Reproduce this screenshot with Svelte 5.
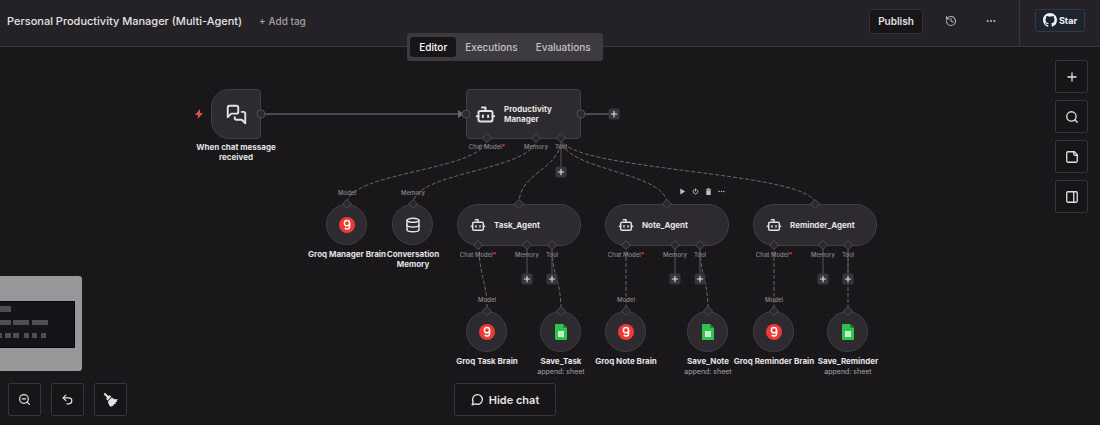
<script>
  const strokes = {
    bot: ['M12 8V4H8', 'M6 8h12a2 2 0 0 1 2 2v8a2 2 0 0 1-2 2H6a2 2 0 0 1-2-2v-8a2 2 0 0 1 2-2z', 'M2 14h2', 'M20 14h2', 'M15 13v2', 'M9 13v2'],
    chat: ['M14 9a2 2 0 0 1-2 2H6l-4 4V4a2 2 0 0 1 2-2h8a2 2 0 0 1 2 2z', 'M18 9h2a2 2 0 0 1 2 2v11l-4-4h-6a2 2 0 0 1-2-2v-1'],
    database: ['M3 5a9 3 0 1 0 18 0a9 3 0 1 0-18 0', 'M3 5v14a9 3 0 0 0 18 0V5', 'M3 12a9 3 0 0 0 18 0'],
    history: ['M3 12a9 9 0 1 0 9-9 9.75 9.75 0 0 0-6.74 2.74L3 8', 'M3 3v5h5', 'M12 7v5l4 2'],
    plus: ['M5 12h14', 'M12 5v14'],
    search: ['M3 11a8 8 0 1 0 16 0a8 8 0 1 0-16 0', 'm21 21-4.3-4.3'],
    note: ['M16 3H5a2 2 0 0 0-2 2v14a2 2 0 0 0 2 2h14a2 2 0 0 0 2-2V8Z', 'M15 3v4a2 2 0 0 0 2 2h4'],
    panel: ['M5 3h14a2 2 0 0 1 2 2v14a2 2 0 0 1-2 2H5a2 2 0 0 1-2-2V5a2 2 0 0 1 2-2z', 'M15 3v18'],
    zoomOut: ['M3 11a8 8 0 1 0 16 0a8 8 0 1 0-16 0', 'm21 21-4.3-4.3', 'M8 11h6'],
    undo: ['M9 14 4 9l5-5', 'M4 9h10.5a5.5 5.5 0 0 1 0 11H11'],
    bubble: ['M7.9 20A9 9 0 1 0 4 16.1L2 22Z'],
    power: ['M12 3v8', 'M7.5 5.5a8 8 0 1 0 9 0']
  };

  const agents = [
    { name: 'Task_Agent', x: 457, y: 204 },
    { name: 'Note_Agent', x: 605, y: 204 },
    { name: 'Reminder_Agent', x: 753, y: 204 }
  ];

  const circles = [
    { name: 'Groq Manager Brain', x: 347, y: 225, kind: 'groq', port: 'Model' },
    { name: 'Conversation Memory', x: 413, y: 225, kind: 'database', port: 'Memory', wrap: true },
    { name: 'Groq Task Brain', x: 487, y: 332, kind: 'groq', port: 'Model' },
    { name: 'Save_Task', x: 561, y: 332, kind: 'sheet', sub: 'append: sheet' },
    { name: 'Groq Note Brain', x: 626, y: 332, kind: 'groq', port: 'Model' },
    { name: 'Save_Note', x: 708, y: 332, kind: 'sheet', sub: 'append: sheet' },
    { name: 'Groq Reminder Brain', x: 774, y: 332, kind: 'groq', port: 'Model' },
    { name: 'Save_Reminder', x: 848, y: 332, kind: 'sheet', sub: 'append: sheet' }
  ];

  const links = [
    [487, 138, 347, 204], [536, 138, 413, 204],
    [561, 138, 519, 204], [561, 138, 667, 204], [561, 138, 815, 204],
    [479, 245, 487, 311], [552, 245, 561, 311],
    [626, 245, 626, 311], [700, 245, 708, 311],
    [774, 245, 774, 311], [848, 245, 848, 311]
  ];

  const stubs = [[561, 138, 172], ...agents.flatMap((a) => [[a.x + 70, 245, 279], [a.x + 95, 245, 279]])];

  const diamonds = [
    [487, 138], [536, 138], [561, 138],
    ...agents.flatMap((a) => [[a.x + 62, 204], [a.x + 21, 245], [a.x + 70, 245], [a.x + 95, 245]]),
    ...circles.map((c) => [c.x, c.y - 21])
  ];

  const ports = [
    { text: 'Chat Model', x: 487, y: 147, required: true },
    { text: 'Memory', x: 536, y: 147 },
    { text: 'Tool', x: 561, y: 147 },
    ...agents.flatMap((a) => [
      { text: 'Chat Model', x: a.x + 21, y: 255, required: true },
      { text: 'Memory', x: a.x + 70, y: 255 },
      { text: 'Tool', x: a.x + 95, y: 255 }
    ]),
    ...circles.filter((c) => c.port).map((c) => ({ text: c.port, x: c.x, y: c.y - 32 }))
  ];

  const adders = [[614, 114], ...stubs.map(([x, , y]) => [x, y])];

  const curve = ([x1, y1, x2, y2]) => {
    const m = (y1 + y2) / 2;
    return `M${x1} ${y1}C${x1} ${m} ${x2} ${m} ${x2} ${y2}`;
  };

  const sideTools = [['plus', 'Add node'], ['search', 'Search'], ['note', 'Add note'], ['panel', 'Toggle panel']];
  const tabs = ['Editor', 'Executions', 'Evaluations'];
  let active = $state('Editor');
</script>

{#snippet icon(name, size, weight = 2)}
  <svg width={size} height={size} viewBox="0 0 24 24" fill="none" stroke="currentColor" stroke-width={weight} stroke-linecap="round" stroke-linejoin="round" aria-hidden="true">
    {#each strokes[name] as d}<path {d} />{/each}
  </svg>
{/snippet}

{#snippet dots(size)}
  <svg width={size} height={size} viewBox="0 0 24 24" fill="currentColor" aria-hidden="true">
    <circle cx="4" cy="12" r="2.6" /><circle cx="12" cy="12" r="2.6" /><circle cx="20" cy="12" r="2.6" />
  </svg>
{/snippet}

<div class="app">
  <header>
    <div class="bar">
      <h1>Personal Productivity Manager (Multi-Agent)</h1>
      <button class="tag">+ Add tag</button>
      <button class="publish">Publish</button>
      <button class="plain" aria-label="History">{@render icon('history', 12, 2.2)}</button>
      <button class="plain" aria-label="More">{@render dots(10)}</button>
    </div>
    <div class="social">
      <a class="star" href="#star">
        <svg width="14" height="14" viewBox="0 0 16 16" fill="currentColor" aria-hidden="true">
          <path d="M8 0C3.58 0 0 3.58 0 8c0 3.54 2.29 6.53 5.47 7.59.4.07.55-.17.55-.38 0-.19-.01-.82-.01-1.49-2.01.37-2.53-.49-2.69-.94-.09-.23-.48-.94-.82-1.13-.28-.15-.68-.52-.01-.53.63-.01 1.08.58 1.23.82.72 1.21 1.87.87 2.33.66.07-.52.28-.87.51-1.07-1.78-.2-3.64-.89-3.64-3.95 0-.87.31-1.59.82-2.15-.08-.2-.36-1.02.08-2.12 0 0 .67-.21 2.2.82.64-.18 1.32-.27 2-.27s1.36.09 2 .27c1.53-1.04 2.2-.82 2.2-.82.44 1.1.16 1.92.08 2.12.51.56.82 1.27.82 2.15 0 3.07-1.87 3.75-3.65 3.95.29.25.54.73.54 1.48 0 1.07-.01 1.93-.01 2.2 0 .21.15.46.55.38A8.01 8.01 0 0 0 16 8c0-4.42-3.58-8-8-8z" />
        </svg>
        Star
      </a>
    </div>
    <nav>
      <div class="tabs">
        {#each tabs as tab}
          <button class:active={active === tab} onclick={() => (active = tab)}>{tab}</button>
        {/each}
      </div>
    </nav>
  </header>

  <main>
    <div class="world">
      <svg class="wires" width="1100" height="425" viewBox="0 0 1100 425" fill="none" aria-hidden="true">
        <path class="solid" d="M261 114H462M581 114H609" />
        <path class="arrow" d="M458 110l6 4-6 4z" />
        {#each links as link}<path class="dash" d={curve(link)} />{/each}
        {#each stubs as [x, y1, y2]}<path class="stub" d={`M${x} ${y1}V${y2}`} />{/each}
      </svg>

      <div class="node trigger">{@render icon('chat', 21, 2.2)}</div>
      <svg class="bolt" width="8" height="10" viewBox="0 0 8 10" aria-hidden="true"><path fill="#e5504b" d="M5 0 0 6h3L2.600 10 8 4H5z" /></svg>
      <div class="caption narrow" style:left="236px" style:top="142px">When chat message received</div>

      <div class="node manager">{@render icon('bot', 21, 2.2)}<span>Productivity Manager</span></div>

      {#each agents as a}
        <div class="node agent" style:left="{a.x}px" style:top="{a.y}px">{@render icon('bot', 16, 2.2)}<span>{a.name}</span></div>
      {/each}

      {#each circles as c}
        <div class="node round" style:left="{c.x - 21}px" style:top="{c.y - 21}px">
          {#if c.kind === 'groq'}
            <svg width="16" height="16" viewBox="0 0 16 16" fill="none" aria-hidden="true">
              <circle cx="8" cy="8" r="8" fill="#ee3a37" />
              <circle cx="8" cy="6.200" r="2.600" stroke="#fff" stroke-width="1.500" />
              <path d="M10.600 6.200v3.200a2.600 2.600 0 0 1-4.700 1.600" stroke="#fff" stroke-width="1.500" />
            </svg>
          {:else if c.kind === 'sheet'}
            <svg width="12" height="16" viewBox="0 0 12 16" aria-hidden="true">
              <path fill="#2fc24c" d="M1 0h7l4 4v11a1 1 0 0 1-1 1H1a1 1 0 0 1-1-1V1a1 1 0 0 1 1-1z" />
              <path fill="#1b8f35" d="M8 0l4 4H8z" />
              <path fill="#d9f7dd" d="M3 7h6v6H3z" />
              <path stroke="#9be2a7" stroke-width=".6" d="M3 9h6M3 11h6M6 7v6" />
            </svg>
          {:else}
            {@render icon('database', 16, 2.2)}
          {/if}
        </div>
        <div class="caption" class:wrap={c.wrap} style:left="{c.x}px" style:top="{c.y + 24}px">
          {c.name}
          {#if c.sub}<small>{c.sub}</small>{/if}
        </div>
      {/each}

      <svg class="wires" width="1100" height="425" viewBox="0 0 1100 425" aria-hidden="true">
        {#each [261, 466, 581] as x}<circle class="pin" cx={x} cy="114" r="4" />{/each}
        {#each diamonds as [x, y]}<path class="pin" d={`M${x} ${y - 4.500}l4.500 4.500-4.500 4.500-4.500-4.500z`} />{/each}
      </svg>

      {#each ports as p}
        <span class="port" style:left="{p.x}px" style:top="{p.y}px">{p.text}{#if p.required}<b>*</b>{/if}</span>
      {/each}

      {#each adders as [x, y]}
        <button class="adder" style:left="{x}px" style:top="{y}px" aria-label="Add connection">{@render icon('plus', 9, 3)}</button>
      {/each}

      <div class="actions">
        <button aria-label="Run"><svg width="7" height="7" viewBox="0 0 8 8" fill="currentColor"><path d="M1.500 0.500 7 4 1.500 7.500z" /></svg></button>
        <button aria-label="Disable">{@render icon('power', 7, 3)}</button>
        <button aria-label="Delete"><svg width="7" height="7" viewBox="0 0 8 8" fill="currentColor"><path d="M3 0h2v1h2v1H1V1h2zM1.500 2.500h5V8h-5z" /></svg></button>
        <button aria-label="Options">{@render dots(7)}</button>
      </div>
    </div>

    <div class="side">
      {#each sideTools as [name, label]}
        <button class="tool" aria-label={label}>{@render icon(name, 14, 2.2)}</button>
      {/each}
    </div>

    <div class="corner">
      <svg class="map" width="82" height="95" viewBox="0 0 82 95" aria-hidden="true">
        <path fill="#99979a" d="M0 0h79a3 3 0 0 1 3 3v89a3 3 0 0 1-3 3H0z" />
        <path fill="#161418" stroke="#050505" d="M-1 25.500h75.500v46H-1z" />
        <path fill="#504e52" d="M0 30h11v6H0zM0 44h11v5H0zM13 44h16v5H13zM32 44h16v5H32zM0 57h2v5H0zM5 57h6v5H5zM13 57h6v5h-6zM24 57h5v5h-5zM32 57h5v5h-5zM41 57h5v5h-5z" />
      </svg>
      <div class="controls">
        <button class="tool" aria-label="Zoom out">{@render icon('zoomOut', 13, 2.2)}</button>
        <button class="tool" aria-label="Undo">{@render icon('undo', 13, 2.2)}</button>
        <button class="tool" aria-label="Tidy up">
          <svg width="15" height="15" viewBox="0 0 15 15" fill="currentColor" aria-hidden="true">
            <path d="M.6 2.200 2 .8 5.400 4 6.800 3.300 8.300 4.800 4.600 8.400 3.200 6.900 3.900 5.500z" />
            <path d="M8.900 5.400c1.500 1.500 3.600 2.200 6 1.900l-1.300 1.500.8.500-2 1.300.5.900-2.300.9v1l-3 1.300C5.700 13.200 4.900 11.300 5.200 9.100z" />
          </svg>
        </button>
      </div>
    </div>

    <div class="dock"><button class="hide">{@render icon('bubble', 13, 2.4)}Hide chat</button></div>
  </main>
</div>

<style>
  :global(body) { margin: 0; background: #19171a; }
  .app {
    display: flex;
    flex-direction: column;
    min-height: 100vh;
    font-family: Inter, sans-serif;
    color: #e4e2e5;
    background: #19171a;
  }
  button, a { font: inherit; color: inherit; cursor: pointer; }
  button { margin: 0; padding: 0; border: 0; background: none; }
  svg { display: block; flex: none; }

  header {
    position: relative;
    z-index: 2;
    display: flex;
    background: #242226;
    border-bottom: 1px solid #3a383c;
  }
  .bar { flex: 1; display: flex; align-items: center; height: 46px; padding: 0 16px 4px 7px; box-sizing: border-box; }
  h1 { margin: 0; font-size: 11px; font-weight: 500; white-space: nowrap; }
  .tag { margin-left: 17px; font-size: 10px; font-weight: 500; color: #a19fa3; white-space: nowrap; }
  .publish {
    margin-left: auto;
    width: 54px;
    height: 25px;
    border: 1px solid #343236;
    border-radius: 3px;
    background: #171518;
    font-size: 10px;
    font-weight: 600;
  }
  .plain { display: grid; place-items: center; width: 24px; height: 24px; margin-left: 16px; color: #b5b3b7; }
  .social { display: flex; align-items: center; padding: 0 15px 6px 15px; border-left: 1px solid #3a383c; }
  .star {
    display: flex;
    align-items: center;
    justify-content: center;
    gap: 2px;
    width: 48px;
    height: 21px;
    border: 1px solid #303a49;
    border-radius: 3px;
    background: #1e242e;
    color: #f0f2f5;
    font-size: 9px;
    font-weight: 700;
    text-decoration: none;
  }
  nav { position: absolute; top: 33px; left: 0; right: 90px; display: flex; justify-content: center; pointer-events: none; }
  .tabs { display: flex; padding: 4px 3px; border-radius: 3px; background: #3d3b3f; pointer-events: auto; }
  .tabs button { padding: 0 9px; height: 20px; border-radius: 3px; font-size: 10px; font-weight: 500; color: #c4c2c6; }
  .tabs .active { background: #171518; color: #fff; }

  main {
    position: relative;
    flex: 1;
    overflow: hidden;
    background-image: radial-gradient(circle, #1d1b1f 1px, transparent 1px);
    background-size: 8px 8px;
  }
  .world { position: absolute; top: -47px; left: 0; }
  .wires { position: absolute; top: 0; left: 0; pointer-events: none; }
  .solid { stroke: #4c4a4e; stroke-width: 2; }
  .stub { stroke: #59575b; stroke-width: 1; }
  .arrow { fill: #69676b; }
  .dash { stroke: #6a686c; stroke-width: 1; stroke-dasharray: 4 2; }
  .pin { fill: #2b292d; stroke: #504e52; stroke-width: 1; }

  .node {
    position: absolute;
    display: flex;
    align-items: center;
    box-sizing: border-box;
    border: 1px solid #413f43;
    background: #2d2b2f;
    color: #e4e2e5;
    font-size: 8px;
    line-height: 10px;
    font-weight: 700;
  }
  .trigger { left: 211px; top: 89px; width: 50px; height: 50px; justify-content: center; border-radius: 18px 4px 4px 18px; }
  .manager { left: 466px; top: 89px; width: 115px; height: 50px; gap: 8px; padding: 0 24px 0 8px; border-radius: 4px; }
  .agent { width: 124px; height: 42px; gap: 8px; padding: 0 0 0 12px; border-radius: 21px; }
  .round { width: 41px; height: 41px; justify-content: center; border-radius: 50%; }
  .bolt { position: absolute; left: 195px; top: 109px; }
  .caption {
    position: absolute;
    translate: -50% 0;
    width: max-content;
    text-align: center;
    font-size: 8px;
    line-height: 10px;
    font-weight: 700;
  }
  .narrow { width: 90px; }
  .wrap { width: 70px; }
  .caption small { display: block; font-size: 7px; line-height: 12px; font-weight: 400; color: #a5a3a7; }
  .port {
    position: absolute;
    translate: -50% -50%;
    font-size: 6px;
    line-height: 8px;
    font-weight: 500;
    white-space: nowrap;
    color: #8b898d;
  }
  .port b { color: #ef4056; }
  .adder {
    position: absolute;
    translate: -50% -50%;
    display: grid;
    place-items: center;
    width: 11px;
    height: 11px;
    border-radius: 2px;
    background: #38363a;
  }
  .actions { position: absolute; left: 679px; top: 188px; display: flex; gap: 6px; color: #c3c1c5; }

  .side { position: absolute; top: 13px; right: 12px; display: flex; flex-direction: column; gap: 7px; }
  .tool {
    display: grid;
    place-items: center;
    box-sizing: border-box;
    width: 33px;
    height: 33px;
    border: 1px solid #373539;
    border-radius: 2px;
    background: #171518;
  }
  .corner { position: absolute; left: 0; bottom: 9px; display: flex; flex-direction: column; gap: 12px; }
  .controls { display: flex; gap: 10px; padding-left: 8px; }
  .dock { position: absolute; left: 0; right: 90px; bottom: 9px; display: flex; justify-content: center; pointer-events: none; }
  .hide {
    display: flex;
    align-items: center;
    justify-content: center;
    gap: 5px;
    box-sizing: border-box;
    width: 102px;
    height: 33px;
    border: 1px solid #373539;
    border-radius: 3px;
    background: #171518;
    font-size: 11px;
    font-weight: 600;
    pointer-events: auto;
  }
</style>
